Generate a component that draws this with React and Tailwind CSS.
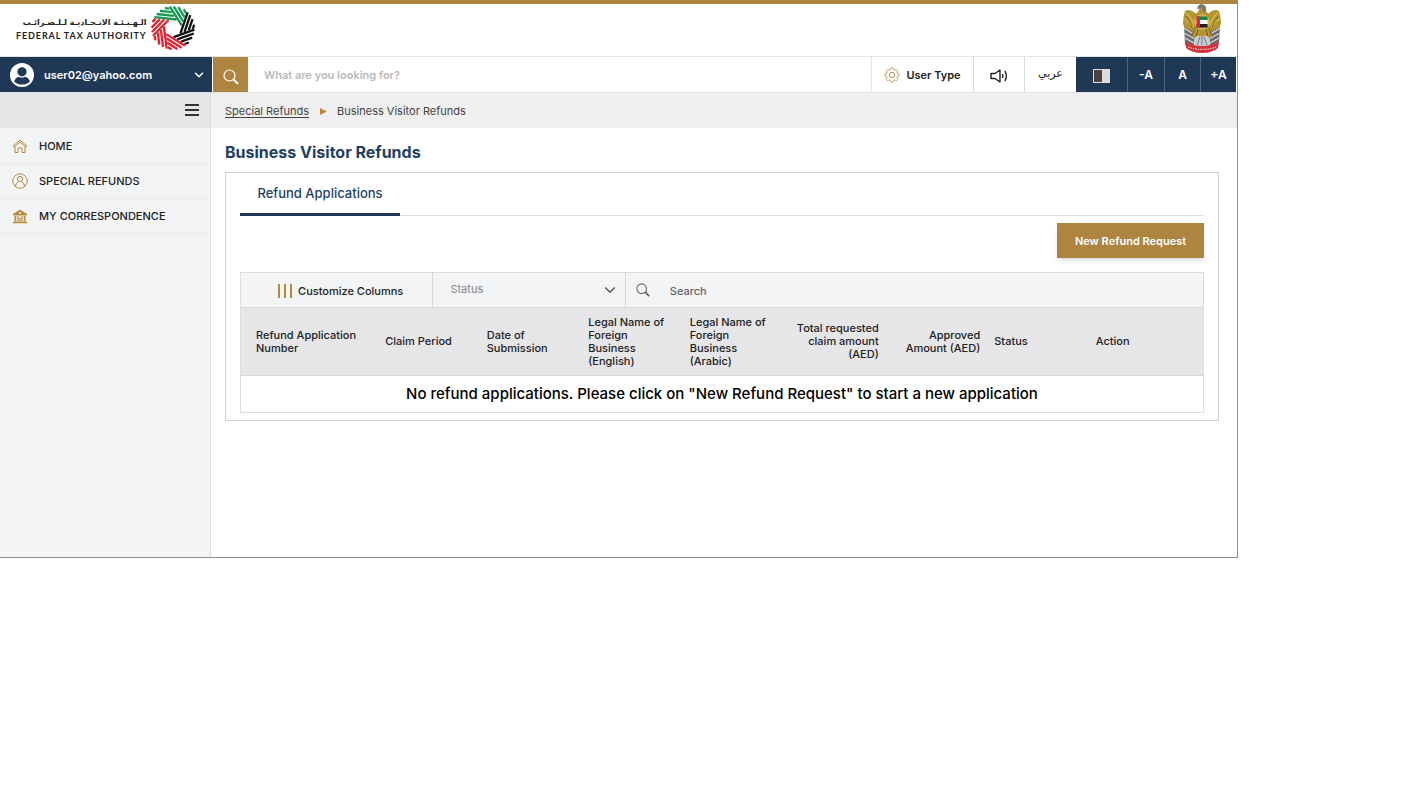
import React from "react";
import { ChevronDown } from "lucide-react";

const RING = ["#159a50", "#159a50", "#111111", "#111111", "#e5202f", "#e5202f", "#e5202f"];

function RingLogo() {
  const inner = 7.5;
  const outer = 21.5;
  const theta = (2 * Math.PI) / 7;
  const offsets = [8.8, 12.2, 15.6, 19];
  return (
    <svg viewBox="-22 -22 44 44" className="size-11" aria-hidden="true">
      {RING.map((color, k) => (
        <g key={k} transform={`rotate(${(k * 360) / 7 + 6})`} stroke={color} strokeWidth="2.3">
          {offsets.map((d) => (
            <line
              key={d}
              x1={-Math.sqrt(outer * outer - d * d)}
              x2={(inner - d * Math.cos(theta)) / Math.sin(theta)}
              y1={-d}
              y2={-d}
            />
          ))}
        </g>
      ))}
    </svg>
  );
}

function Emblem() {
  return (
    <svg viewBox="0 0 40 50" className="h-[50px] w-10" role="img" aria-label="UAE emblem">
      <path d="M2 21 L3 40 Q8 44 12 41 L15 25 Z M38 21 L37 40 Q32 44 28 41 L25 25 Z" fill="#6c6c72" />
      <path d="M2 24l11 7M2 29l11 6M3 34l9 5M38 24l-11 7M38 29l-11 6M37 34l-9 5" stroke="#d8d8d8" strokeWidth="1.2" />
      <path d="M14 10 Q8 4 3 7 Q1 13 1 20 L3 24 Q10 25 13 32 L16 26 Z" fill="#b59431" />
      <path d="M26 10 Q32 4 37 7 Q39 13 39 20 L37 24 Q30 25 27 32 L24 26 Z" fill="#b59431" />
      <path d="M4 9q5 3 9 14M3 15q6 4 9 12M36 9q-5 3-9 14M37 15q-6 4-9 12" fill="none" stroke="#d7b94d" strokeWidth="1.4" />
      <path d="M4 12q4 5 7 14M36 12q-4 5-7 14" fill="none" stroke="#6d5718" strokeWidth=".8" />
      <path d="M12 10 Q17 9 17 5 Q16 1 20 1 Q25 1 24 6 Q24 9 28 10 L28 26 L31 33 H9 L12 26 Z" fill="#b59431" />
      <path d="M15 5 Q16 0 20 0 Q24 1 24 6 L22 9 L20 4 Z" fill="#7c7769" />
      <path d="M13 24l-3 8M27 24l3 8M16 26l-2 6M24 26l2 6" stroke="#705b1d" />
      <path d="M12 36 L15 32 H25 L28 36 L27 42 H13 Z" fill="#c9ced0" />
      <path d="M15 41l3-8M20 41v-9M25 41l-3-8" stroke="#6f7678" />
      <circle cx="20" cy="18" r="7.8" fill="#d0b25c" />
      <path d="M14.5 12.5h11V16h-11z" fill="#12854b" />
      <path d="M14.5 16h11v4h-11z" fill="#fff" />
      <path d="M14.5 20h11v3.5h-11z" fill="#202020" />
      <path d="M14.5 12.5H18v11h-3.5z" fill="#df2632" />
      <path d="M3 37 Q10 42 20 42 Q30 42 37 37 L36 44 Q30 49 20 49 Q10 49 4 44 Z" fill="#d1333c" />
      <path d="M6 43 Q20 48 34 43" fill="none" stroke="#f5c5c5" strokeWidth="1.2" strokeDasharray="1.5 1" />
    </svg>
  );
}

function SearchIcon({ className }) {
  return (
    <svg viewBox="0 0 16 16" className={className} fill="none" stroke="currentColor" aria-hidden="true">
      <circle cx="6.5" cy="6.5" r="5.5" strokeWidth="1.2" />
      <path d="M10.5 10.5 L15 15" strokeWidth="2" />
    </svg>
  );
}

function GearIcon() {
  const points = Array.from({ length: 64 }, (_, i) => {
    const a = (i / 64) * 2 * Math.PI;
    const wave = Math.cos(8 * a);
    const r = 6.4 + Math.max(-0.8, Math.min(0.8, wave * 1.5));
    return `${(8 + r * Math.cos(a)).toFixed(2)},${(8 + r * Math.sin(a)).toFixed(2)}`;
  }).join(" ");
  return (
    <svg viewBox="0 0 16 16" className="size-4" fill="none" stroke="#bb8d5a" strokeLinejoin="round" aria-hidden="true">
      <polygon points={points} />
      <circle cx="8" cy="8" r="2.7" />
    </svg>
  );
}

function UserIcon() {
  return (
    <svg viewBox="0 0 24 24" className="size-6" aria-hidden="true">
      <circle cx="12" cy="12" r="12" fill="#fff" />
      <circle cx="12" cy="8.8" r="4.6" fill="#1f3855" />
      <path d="M4 18.5 Q6 14 9 13.7 Q12 15.6 15 13.7 Q18 14 20 18.5 Q17 21.6 12 21.6 Q7 21.6 4 18.5Z" fill="#1f3855" />
    </svg>
  );
}

function HomeIcon() {
  return (
    <svg viewBox="0 0 16 16" className="size-4" fill="none" stroke="#b68a3c" aria-hidden="true">
      <path d="M1 8.2 L8 2 L15 8.2 L14 9.3 L8 4 L2 9.3 Z" />
      <path d="M3 9v5.5h3V10h4v4.5h3V9" />
    </svg>
  );
}

function PersonIcon() {
  return (
    <svg viewBox="0 0 16 16" className="size-4" fill="none" stroke="#b68a3c" aria-hidden="true">
      <circle cx="8" cy="8" r="7.2" />
      <circle cx="8" cy="6" r="2.6" />
      <path d="M3.5 13 Q4 9.5 6.6 8.6 M12.5 13 Q12 9.5 9.4 8.6" />
    </svg>
  );
}

function BankIcon() {
  return (
    <svg viewBox="0 0 16 16" className="size-4" fill="#b68a3c" aria-hidden="true">
      <path d="M8 1.5 L15 6 V7.5 H1 V6 Z" />
      <path d="M2.5 8h1.8v5H2.5zM5.5 8h1.2v5H5.5zM9.3 8h1.2v5H9.3zM11.7 8h1.8v5h-1.8zM7.4 9.5h1.2V13H7.4zM1 13.5h14v1.8H1z" />
      <circle cx="8" cy="5" r="1" fill="#f2f4f6" />
    </svg>
  );
}

function SpeakerIcon() {
  return (
    <svg viewBox="0 0 18 14" className="h-3.5 w-[18px]" fill="none" stroke="#222" strokeWidth="1.4" aria-hidden="true">
      <path d="M1 4.5h4L10 1v12L5 9.5H1z" strokeLinejoin="round" />
      <path d="M12.3 5q1.2 2 0 4M14.8 2q3.2 5 0 10" />
    </svg>
  );
}

const MENU = [
  ["HOME", HomeIcon],
  ["SPECIAL REFUNDS", PersonIcon],
  ["MY CORRESPONDENCE", BankIcon],
];

const COLUMNS = [
  ["Refund Application Number", "w-[14.2%] pl-[15px] pr-2 text-left"],
  ["Claim Period", "w-[10.54%] px-2 text-left"],
  ["Date of Submission", "w-[10.54%] px-2 text-left"],
  ["Legal Name of Foreign Business (English)", "w-[10.54%] px-2 text-left"],
  ["Legal Name of Foreign Business (Arabic)", "w-[10.54%] px-2 text-left"],
  ["Total requested claim amount (AED)", "w-[10.54%] px-1.5 text-right"],
  ["Approved Amount (AED)", "w-[10.54%] px-1.5 text-right"],
  ["Status", "w-[10.54%] px-2 text-left"],
  ["Action", "px-2 text-left"],
];

export default function App() {
  return (
    <div className="min-h-screen bg-white">
      <div className="mr-44 border-r border-b border-[#8c8c8c] font-['Inter','DejaVu_Sans',sans-serif] text-[#222]">
        <header className="flex h-[57px] items-start justify-between border-t-4 border-b border-t-[#ad8440] border-b-[#e4e6e8] pr-[15px] pl-4">
          <a href="#home" className="flex items-start gap-1 pt-0.5">
            <span className="flex flex-col items-end pt-2.5">
              <span lang="ar" dir="rtl" className="font-['DejaVu_Sans',sans-serif] text-[8px] leading-[14px] font-bold whitespace-nowrap">
                الـهـيـئـة الاتـحـاديـة لـلـضـرائـب
              </span>
              <span className="font-['Lato',sans-serif] text-[9px] leading-[11px] font-bold tracking-widest whitespace-nowrap">FEDERAL TAX AUTHORITY</span>
            </span>
            <RingLogo />
          </a>
          <Emblem />
        </header>

        <div className="flex h-9 border-b border-[#e2e4e6]">
          <button className="flex w-[212px] shrink-0 items-center bg-[#1f3855] pr-1.5 pl-2.5 text-[11px] font-semibold text-white">
            <UserIcon />
            <span className="ml-2.5 flex-1 pt-px text-left">user02@yahoo.com</span>
            <ChevronDown className="size-3.5" strokeWidth={2.5} />
          </button>
          <button aria-label="Search site" className="ml-px flex w-[35px] shrink-0 items-center justify-center bg-[#ad8440] pt-1 text-white">
            <SearchIcon className="size-4" />
          </button>
          <input
            aria-label="What are you looking for?"
            placeholder="What are you looking for?"
            className="min-w-0 flex-1 px-4 pt-0.5 text-[11px] font-semibold outline-none placeholder:text-[#b9b9b9]"
          />
          <button className="flex w-[102px] items-center justify-center gap-1.5 border-l border-[#e2e4e6] pt-px text-[11px] font-semibold">
            <GearIcon />
            User Type
          </button>
          <button aria-label="Read aloud" className="flex w-[51px] items-center justify-center border-l border-[#d8dadc] pt-0.5">
            <SpeakerIcon />
          </button>
          <button lang="ar" className="w-[52px] border-l border-[#d8dadc] font-['DejaVu_Sans',sans-serif] text-[11px]">عربي</button>
          <button aria-label="Contrast" className="flex w-[51px] items-center justify-center bg-[#1f3855] pt-0.5">
            <span className="flex h-3.5 w-[17px] border border-[#ddd] bg-[#ddd]">
              <span className="w-1/2 bg-[#4a4140]" />
            </span>
          </button>
          <button className="w-[37px] border-l border-[#50647c] bg-[#1f3855] text-xs font-semibold text-white">-A</button>
          <button className="w-9 border-l border-[#50647c] bg-[#1f3855] text-xs font-semibold text-white">A</button>
          <button className="mr-px w-9 border-l border-[#50647c] bg-[#1f3855] text-xs font-semibold text-white">+A</button>
        </div>

        <div className="flex">
          <aside className="w-[211px] shrink-0 border-r border-[#dcdee0] bg-[#f2f4f6]">
            <div className="flex h-[35px] items-center justify-end bg-[#e6e6e8] pr-[11px] pb-0.5">
              <button aria-label="Toggle menu" className="flex w-3.5 flex-col gap-[3px]">
                <span className="h-0.5 bg-[#333]" />
                <span className="h-0.5 bg-[#333]" />
                <span className="h-0.5 bg-[#333]" />
              </button>
            </div>
            <nav className="pt-px">
              {MENU.map(([label, Icon]) => (
                <a key={label} href="#menu" className="flex h-[35px] items-center gap-[11px] border-b border-[#e9ebed] pl-3 text-[11px] font-medium">
                  <Icon />
                  {label}
                </a>
              ))}
            </nav>
          </aside>

          <main className="min-w-0 flex-1">
            <nav aria-label="Breadcrumb" className="flex h-[35px] items-center bg-[#efefef] pt-px pl-3.5 text-[11px] text-[#444]">
              <a href="#refunds" className="underline underline-offset-2">Special Refunds</a>
              <svg viewBox="0 0 7 7" className="mr-2.5 ml-[11px] size-[7px]" aria-hidden="true">
                <path d="M0 0L7 3.5L0 7Z" fill="#b68a3c" />
              </svg>
              <span>Business Visitor Refunds</span>
            </nav>
            <div className="pt-3 pr-[18px] pb-[136px] pl-3.5">
              <h1 className="text-base leading-6 font-bold text-[#1f3f66]">Business Visitor Refunds</h1>
              <section className="mt-2 border border-[#cfd1d3] px-3.5 pb-[7px]">
                <div role="tablist" className="flex border-b border-[#dcdcdc]">
                  <button role="tab" aria-selected="true" className="-mb-px h-[43px] w-40 border-b-[3px] border-[#1f3855] pt-0.5 text-[13px] font-medium text-[#1f3f66]">
                    Refund Applications
                  </button>
                </div>
                <div className="flex justify-end pt-[7px] pb-3.5">
                  <button className="h-[35px] w-[147px] bg-[#ad8440] pt-px text-[11px] font-semibold text-white shadow-md">New Refund Request</button>
                </div>
                <div className="flex h-9 border border-[#dadde0] bg-[#f2f4f6]">
                  <button className="flex w-1/5 items-center justify-center gap-1.5 border-r border-[#d4d6d8] pt-0.5 pl-2 text-[11px] font-medium">
                    <span className="flex gap-1">
                      <span className="h-3.5 w-0.5 bg-[#b68a3c]" />
                      <span className="h-3.5 w-0.5 bg-[#b68a3c]" />
                      <span className="h-3.5 w-0.5 bg-[#b68a3c]" />
                    </span>
                    Customize Columns
                  </button>
                  <div className="relative w-1/5 border-r border-[#d4d6d8]">
                    <select aria-label="Status" className="h-8 w-full appearance-none bg-transparent pl-[17px] text-[11px] text-[#888] outline-none">
                      <option>Status</option>
                    </select>
                    <ChevronDown className="pointer-events-none absolute top-2 right-1.5 size-[18px] text-[#444]" strokeWidth={1.5} />
                  </div>
                  <label className="flex flex-1 items-center pl-2.5 text-[#666]">
                    <SearchIcon className="size-3.5" />
                    <input aria-label="Search" placeholder="Search" className="ml-5 min-w-0 flex-1 pt-0.5 text-[11px] font-medium outline-none placeholder:text-[#666]" />
                  </label>
                </div>
                <table className="w-full table-fixed border-collapse border border-t-0 border-[#dcdee0]">
                  <thead className="bg-[#e6e6e8]">
                    <tr className="h-[67px]">
                      {COLUMNS.map(([label, cls]) => (
                        <th key={label} className={`${cls} pt-px pb-0 text-[11px] leading-[13px] font-medium`}>
                          {label}
                        </th>
                      ))}
                    </tr>
                  </thead>
                  <tbody>
                    <tr className="h-[37px] border-t border-[#d4d6d8]">
                      <td colSpan={9} className="text-center text-[15px] leading-5 font-medium text-black">
                        No refund applications. Please click on "New Refund Request" to start a new application
                      </td>
                    </tr>
                  </tbody>
                </table>
              </section>
            </div>
          </main>
        </div>
      </div>
    </div>
  );
}
